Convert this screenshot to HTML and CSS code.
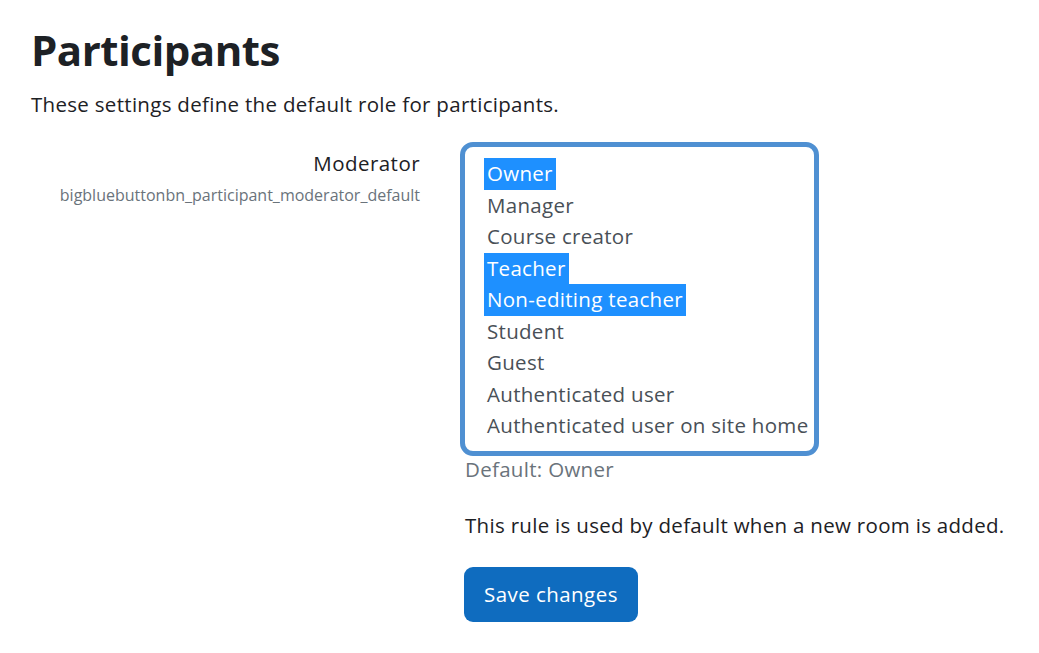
FILE: index.html
```html
<!DOCTYPE html>
<html lang="en">
<head>
<meta charset="utf-8">
<title>Participants</title>
<link rel="stylesheet" href="styles.css">
</head>
<body>
<main class="page">
  <h1 class="title">Participants</h1>
  <p class="intro">These settings define the default role for participants.</p>
  <div class="setting">
    <div class="label-col">
      <div class="label">Moderator</div>
      <div class="setting-name">bigbluebuttonbn_participant_moderator_default</div>
    </div>
    <div class="control-col">
      <div class="select">
        <div class="option"><span class="opt selected">Owner</span></div>
        <div class="option"><span class="opt">Manager</span></div>
        <div class="option"><span class="opt">Course creator</span></div>
        <div class="option"><span class="opt selected">Teacher</span></div>
        <div class="option"><span class="opt selected">Non-editing teacher</span></div>
        <div class="option"><span class="opt">Student</span></div>
        <div class="option"><span class="opt">Guest</span></div>
        <div class="option"><span class="opt">Authenticated user</span></div>
        <div class="option"><span class="opt">Authenticated user on site home</span></div>
      </div>
      <div class="default">Default: Owner</div>
      <div class="desc">This rule is used by default when a new room is added.</div>
      <button class="btn">Save changes</button>
    </div>
  </div>
</main>
</body>
</html>
```

FILE: styles.css
```css
html, body {
  margin: 0;
  padding: 0;
  background: #ffffff;
}
body {
  font-family: "Open Sans", "Noto Sans", "Liberation Sans", sans-serif;
  color: #1d2125;
}
.page {
  padding: 0 0 0 31px;
}
.title {
  margin: 25px 0 0 0;
  font-size: 42px;
  line-height: 50px;
  font-weight: 700;
  letter-spacing: -0.5px;
}
.intro {
  margin: 14px 0 0 0;
  font-size: 20.5px;
  letter-spacing: 0.3px;
  line-height: 30px;
}
.setting {
  display: flex;
  margin-top: 23px;
}
.label-col {
  width: 389px;
  text-align: right;
  padding-top: 6px;
}
.label {
  font-size: 20.5px;
  letter-spacing: 0.45px;
  line-height: 30px;
  color: #1d2125;
}
.setting-name {
  margin-top: 6px;
  font-size: 16px;
  line-height: 22px;
  color: #6a737b;
}
.control-col {
  margin-left: 40px;
  display: flex;
  flex-direction: column;
  align-items: flex-start;
}
.select {
  box-sizing: border-box;
  width: 359px;
  border: 5px solid #4f90d2;
  border-radius: 13px;
  padding: 11px 0 9px 19px;
  overflow: hidden;
  white-space: nowrap;
}
.option {
  height: 31.5px;
  line-height: 31.5px;
  font-size: 20.5px;
  letter-spacing: 0.3px;
  color: #495057;
}
.opt {
  display: inline-block;
  padding: 0 3px;
}
.opt.selected {
  background: #1e90ff;
  color: #ffffff;
}
.default {
  margin-left: 5px;
  font-size: 20.5px;
  letter-spacing: 0.3px;
  line-height: 26px;
  color: #6a737b;
}
.desc {
  margin: 28px 0 0 5px;
  font-size: 20.5px;
  letter-spacing: 0.3px;
  line-height: 30px;
  color: #1d2125;
}
.btn {
  margin: 27px 0 0 4px;
  height: 55px;
  padding: 0 20px;
  border: none;
  border-radius: 9px;
  background: #0f6cbf;
  color: #ffffff;
  font-family: inherit;
  font-size: 20.5px;
  letter-spacing: 0.45px;
}
```
